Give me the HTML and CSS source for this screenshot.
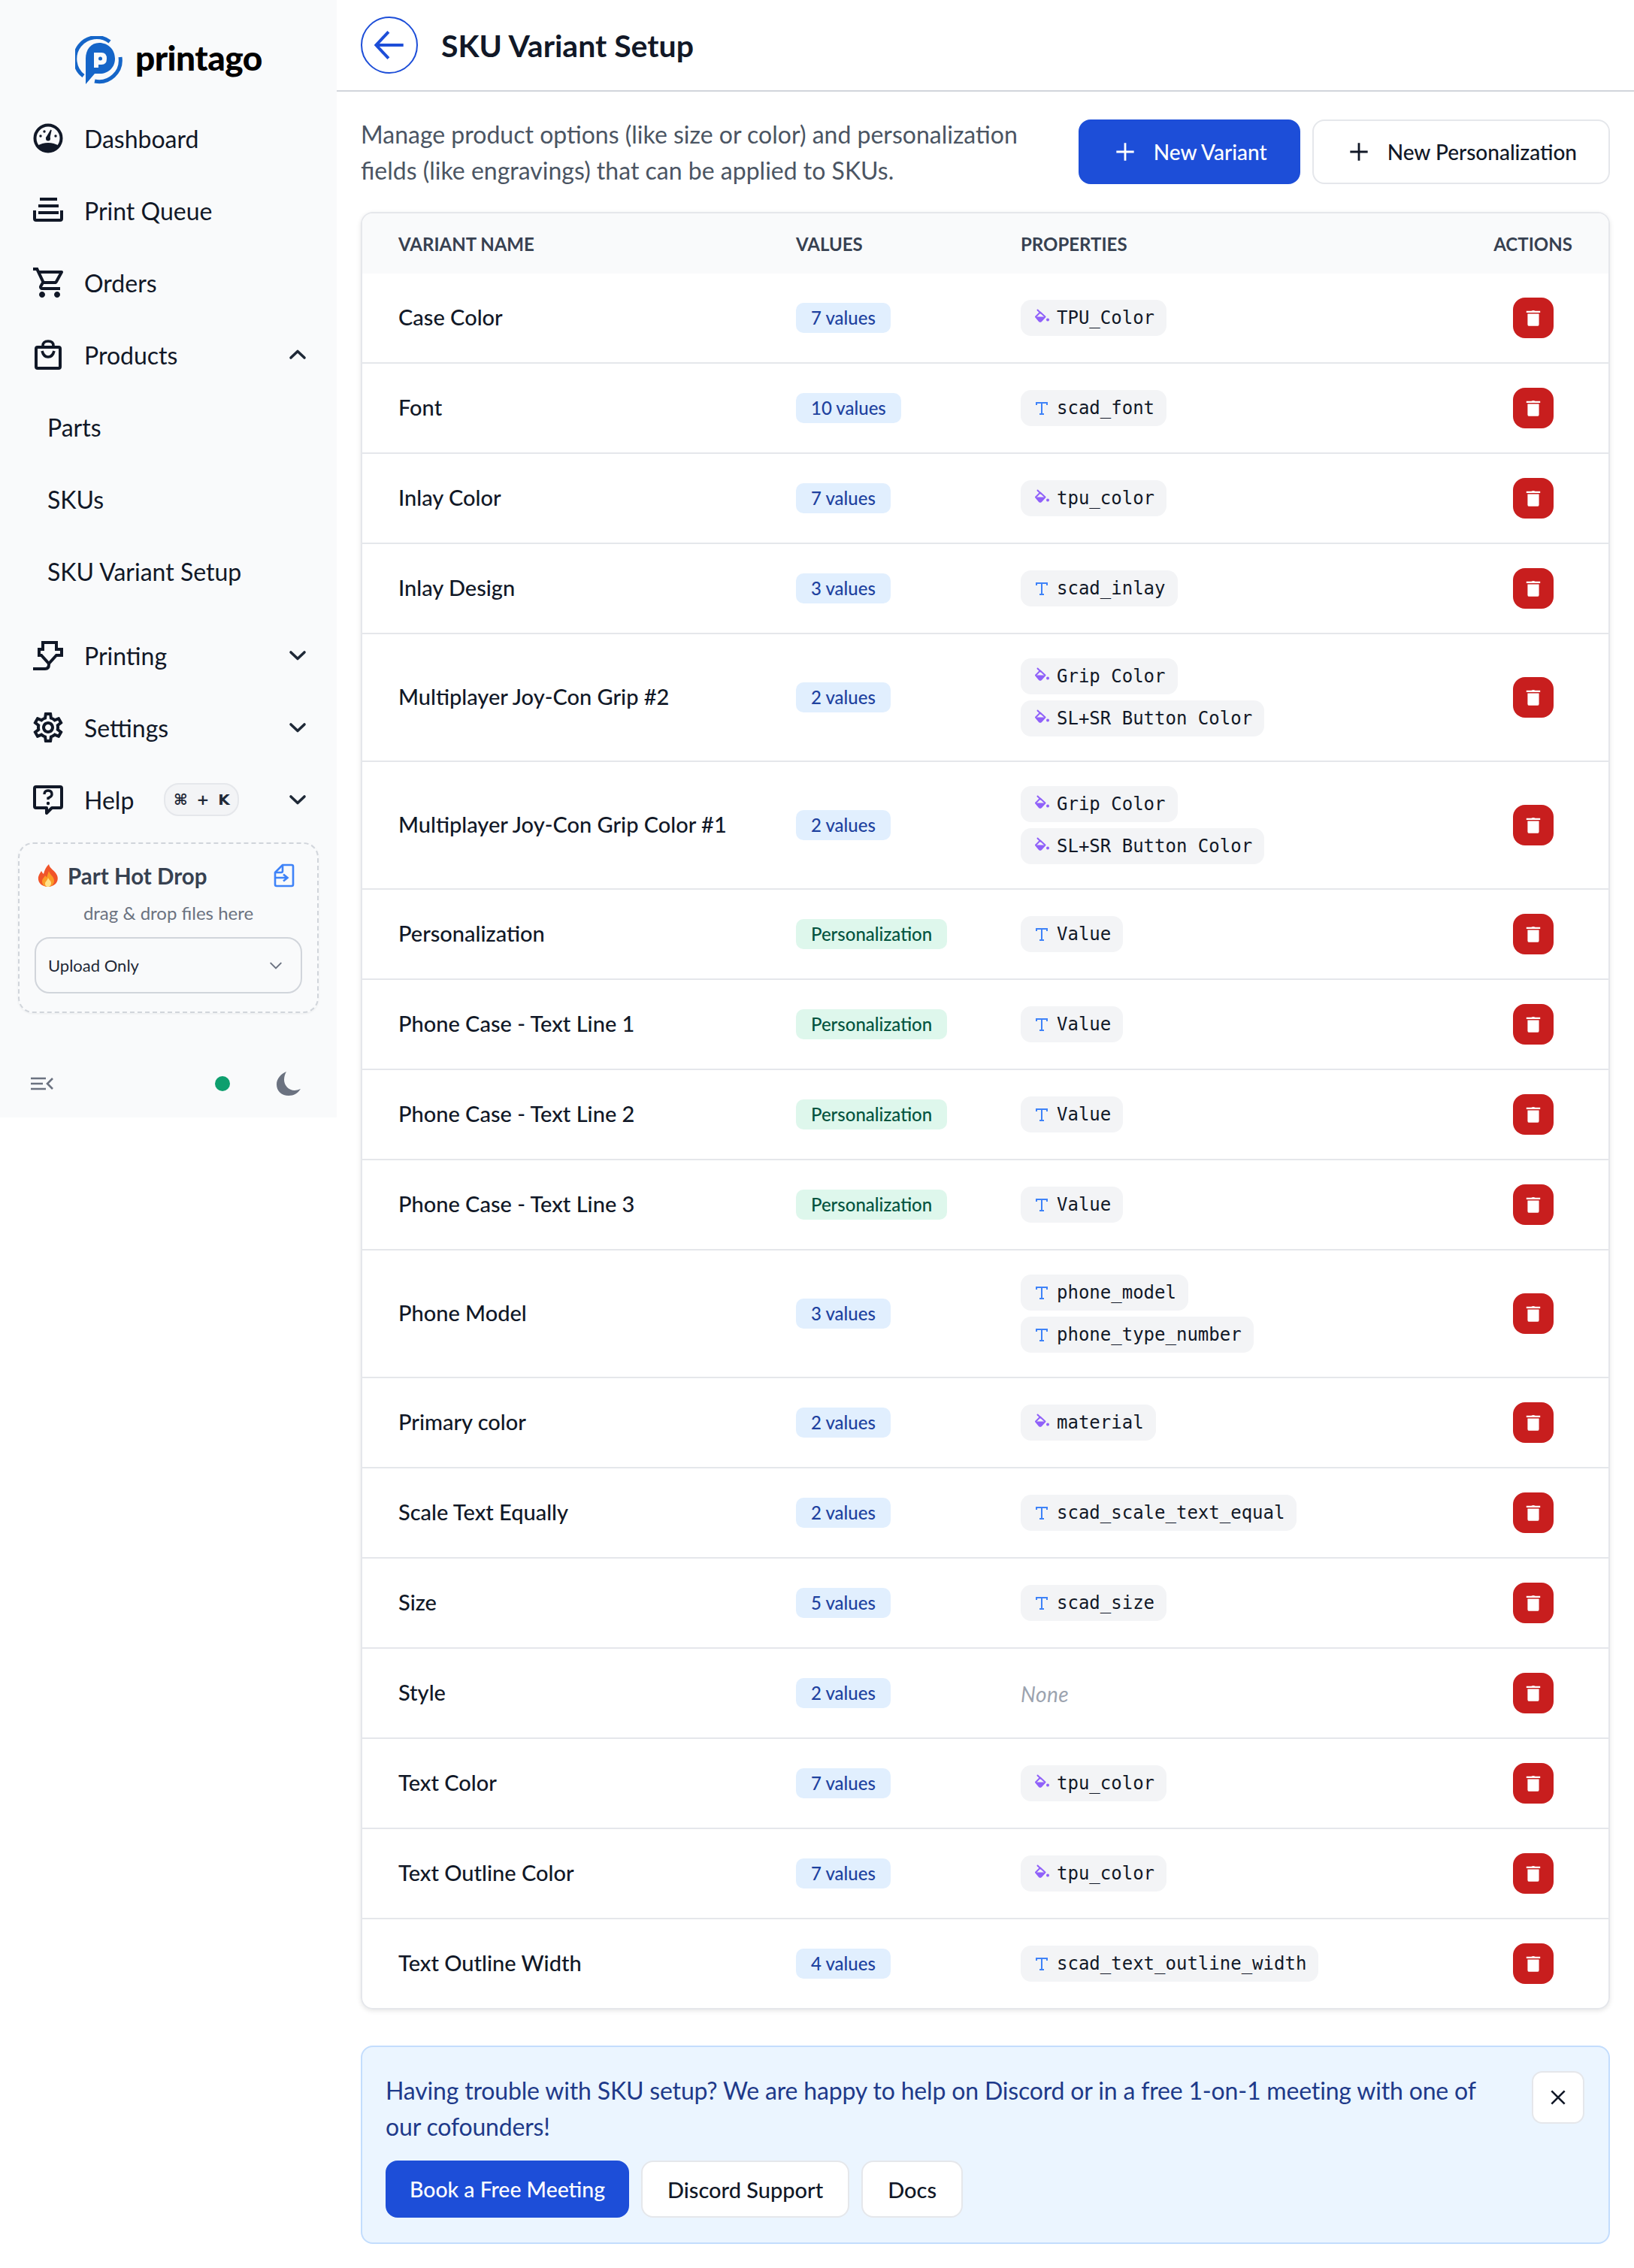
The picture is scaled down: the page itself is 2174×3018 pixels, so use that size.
FILE: index.html
```html
<!DOCTYPE html>
<html lang="en">
<head>
  <meta charset="UTF-8">
  <meta name="viewport" content="width=device-width, initial-scale=1.0">
  <title>Printago - SKU Variant Setup</title>
  <link rel="stylesheet" href="styles.css">
</head>
<body>
  <svg class="sprite" xmlns="http://www.w3.org/2000/svg">
    <symbol id="bucket" viewBox="0 0 24 24">
      <path d="M6.500 1.500 10.500 5.500" fill="none" stroke="currentColor" stroke-width="2" stroke-linecap="round"/>
      <path d="M4 10.500 10 4.500 16.500 10.500 11 16.500Q10 17.200 9 16.500Z" fill="none" stroke="currentColor" stroke-width="2" stroke-linejoin="round"/>
      <path d="M4 10.500H16.500L11 16.500Q10 17.200 9 16.500Z" fill="currentColor"/>
      <circle cx="20" cy="14.500" r="2" fill="currentColor"/>
    </symbol>
    <symbol id="letter" viewBox="0 0 24 24">
      <path d="M5 8V5H19V8M12 5V20M9 20H15" fill="none" stroke="currentColor" stroke-width="2"/>
    </symbol>
    <symbol id="trash" viewBox="0 0 24 24">
      <path d="M9.500 3.500Q12 2 14.500 3.500H20.500V5.500H3.500V3.500Z" fill="currentColor"/>
      <path d="M5 7H19V20Q19 22 17 22H7Q5 22 5 20Z" fill="currentColor"/>
    </symbol>
    <symbol id="chev" viewBox="0 0 24 24">
      <path d="M3 8 12 16.500 21 8" fill="none" stroke="currentColor" stroke-width="3.600" stroke-linecap="round" stroke-linejoin="round"/>
    </symbol>
    <symbol id="plus" viewBox="0 0 24 24">
      <path d="M12 2V22M2 12H22" fill="none" stroke="currentColor" stroke-width="2.400"/>
    </symbol>
  </svg>

  <div class="app">
    <aside class="sidebar">
      <div class="brand">
        <svg class="brand-mark" viewBox="0 0 64 64">
          <path d="M46 7.500A28.500 28.500 0 0 0 11 53" fill="none" stroke="#1565c8" stroke-width="5"/>
          <path d="M26 60A28.500 28.500 0 0 0 60 28" fill="none" stroke="#1565c8" stroke-width="5"/>
          <path d="M32 9C44 9 53 18 53 30C53 42 44 50 33 50H26L14 64V30C14 18 21 9 32 9Z" fill="#1565c8"/>
          <path d="M25 22H35Q42 22 42 30T35 38H31V42H25Z" fill="#f9fafb"/>
          <rect x="31" y="27.500" width="5" height="5" rx="2.500" fill="#1565c8"/>
        </svg>
        <span class="brand-name">printago</span>
      </div>

      <nav class="nav">
        <a class="nav-item"><svg class="nav-icon" viewBox="0 0 40 40"><circle cx="20" cy="20" r="17.500" fill="none" stroke="currentColor" stroke-width="4"/><path d="M6 30Q12 26 20 26T34 30Q29 38 20 38T6 30Z" fill="currentColor"/><path d="M24 9 21.500 20 18 19Z" fill="currentColor" stroke="currentColor" stroke-width="1.500"/><circle cx="20" cy="20.500" r="3" fill="currentColor"/><circle cx="10" cy="17" r="1.700" fill="currentColor"/><circle cx="15" cy="11" r="1.700" fill="currentColor"/><circle cx="30" cy="17" r="1.700" fill="currentColor"/></svg><span>Dashboard</span></a>
        <a class="nav-item"><svg class="nav-icon" viewBox="0 0 40 40"><path d="M9 5H32M7 14H34M7 23H34" fill="none" stroke="currentColor" stroke-width="4"/><path d="M2 20V31Q2 33 4 33H36Q38 33 38 31V20" fill="none" stroke="currentColor" stroke-width="4"/></svg><span>Print Queue</span></a>
        <a class="nav-item"><svg class="nav-icon" viewBox="1 2 20 20"><path fill="currentColor" d="M15.550 13c.750 0 1.410-.410 1.750-1.030l3.580-6.490c.370-.660-.110-1.480-.870-1.480H5.210l-.940-2H1v2h2l3.600 7.590-1.350 2.440C4.520 15.370 5.480 17 7 17h12v-2H7l1.100-2h7.450zM6.160 6h12.150l-2.760 5H8.530L6.160 6zM7 18c-1.100 0-1.990.900-1.990 2S5.900 22 7 22s2-.900 2-2-.900-2-2-2zm10 0c-1.100 0-1.990.900-1.990 2s.890 2 1.990 2 2-.900 2-2-.900-2-2-2z"/></svg><span>Orders</span></a>
        <a class="nav-item"><svg class="nav-icon" viewBox="0 0 40 40"><rect x="4" y="10" width="32" height="28" rx="2" fill="none" stroke="currentColor" stroke-width="4"/><path d="M13 10V8Q13 2 20 2T27 8V10M12 15Q14 23 20 23T28 15" fill="none" stroke="currentColor" stroke-width="3.600"/></svg><span>Products</span><svg class="chev up"><use href="#chev"/></svg></a>
        <a class="nav-item sub"><span>Parts</span></a>
        <a class="nav-item sub"><span>SKUs</span></a>
        <a class="nav-item sub"><span>SKU Variant Setup</span></a>
        <a class="nav-item group-start"><svg class="nav-icon" viewBox="0 0 40 40"><path d="M13 3H31V12H38V20H31L21 31L11 20H8V12H13Z" fill="none" stroke="currentColor" stroke-width="4"/><path d="M0 38H16Q21 38 21 32" fill="none" stroke="currentColor" stroke-width="4"/></svg><span>Printing</span><svg class="chev"><use href="#chev"/></svg></a>
        <a class="nav-item"><svg class="nav-icon" viewBox="2 2 20 20"><path fill="currentColor" d="M19.430 12.980c.040-.320.070-.640.070-.980 0-.340-.030-.660-.070-.980l2.110-1.650c.190-.150.240-.420.120-.640l-2-3.460c-.090-.160-.260-.250-.440-.250-.060 0-.120.010-.170.030l-2.490 1c-.520-.400-1.080-.730-1.690-.980l-.380-2.650C14.460 2.180 14.250 2 14 2h-4c-.250 0-.460.180-.490.420l-.380 2.650c-.610.250-1.170.590-1.690.980l-2.490-1c-.060-.020-.120-.030-.180-.030-.170 0-.340.090-.430.250l-2 3.460c-.130.220-.070.490.120.640l2.110 1.650c-.040.320-.070.650-.070.980 0 .330.030.660.070.980l-2.110 1.650c-.190.150-.240.420-.120.640l2 3.460c.090.160.260.250.440.250.060 0 .120-.010.170-.030l2.490-1c.520.400 1.080.730 1.690.980l.380 2.650c.030.240.240.420.490.420h4c.250 0 .460-.180.490-.42l.380-2.650c.610-.250 1.170-.590 1.690-.980l2.490 1c.060.020.120.030.180.030.170 0 .340-.090.430-.250l2-3.460c.120-.220.070-.490-.120-.640l-2.110-1.650zm-1.980-1.710c.040.310.050.520.050.730 0 .210-.020.430-.050.730l-.140 1.130.890.700 1.080.840-.700 1.210-1.270-.510-1.040-.420-.900.680c-.430.320-.840.560-1.250.730l-1.060.430-.160 1.130-.200 1.350h-1.400l-.190-1.350-.160-1.130-1.060-.430c-.430-.180-.830-.410-1.230-.710l-.910-.700-1.060.430-1.270.510-.700-1.210 1.080-.84.890-.700-.140-1.130c-.030-.310-.050-.540-.050-.740s.020-.430.050-.730l.140-1.130-.890-.700-1.080-.84.700-1.210 1.270.510 1.040.420.900-.680c.430-.320.840-.560 1.250-.730l1.060-.430.160-1.130.200-1.350h1.390l.190 1.350.160 1.130 1.060.430c.430.180.830.410 1.230.710l.910.700 1.060-.430 1.270-.510.700 1.210-1.070.850-.890.700.140 1.130zM12 8c-2.210 0-4 1.790-4 4s1.790 4 4 4 4-1.790 4-4-1.790-4-4-4zm0 6c-1.100 0-2-.900-2-2s.900-2 2-2 2 .900 2 2-.900 2-2 2z"/></svg><span>Settings</span><svg class="chev"><use href="#chev"/></svg></a>
        <a class="nav-item"><svg class="nav-icon" viewBox="0 0 40 40"><path d="M4 3H36Q38 3 38 5V29Q38 31 36 31H25L18 38V31H4Q2 31 2 29V5Q2 3 4 3Z" fill="none" stroke="currentColor" stroke-width="4" stroke-linejoin="round"/><path d="M15 13Q15 8 20 8T25 13Q25 16 20 18V20" fill="none" stroke="currentColor" stroke-width="3.400"/><circle cx="20" cy="25" r="2.200" fill="currentColor"/></svg><span>Help</span><kbd class="shortcut">⌘ + K</kbd><svg class="chev"><use href="#chev"/></svg></a>
      </nav>

      <section class="hot-drop">
        <div class="hot-drop-head">
          <svg class="flame" viewBox="0 0 28 30">
            <path d="M15 0C16 6 23 8 26 15C29 23 23 30 14 30C5 30 0 24 1 17C2 13 4 11 5 9C6 11 7 12 8 13C9 8 11 4 15 0Z" fill="#f0542a"/>
            <path d="M15 9C16 14 22 16 22 22C22 27 18 30 14 30C9 30 6 27 6 23C6 19 9 18 10 15C11 16 12 17 12 18C13 15 14 12 15 9Z" fill="#fb9a26"/>
            <path d="M14 18C15 21 18 22 18 25C18 28 16 30 14 30C11 30 10 28 10 26C10 23 13 22 14 18Z" fill="#ffe28a"/>
          </svg>
          <span class="hot-drop-title">Part Hot Drop</span>
          <svg class="file-icon" viewBox="0 0 28 32"><path d="M12 2H24Q26 2 26 4V28Q26 30 24 30H4Q2 30 2 28V12Z" fill="none" stroke="currentColor" stroke-width="2.600" stroke-linejoin="round"/><path d="M12 2V10Q12 12 10 12H2" fill="none" stroke="currentColor" stroke-width="2.600"/><path d="M2 19H18M13 14.500 18.500 19 13 23.500" fill="none" stroke="currentColor" stroke-width="2.600"/></svg>
        </div>
        <p class="hot-drop-hint">drag &amp; drop files here</p>
        <div class="select"><span>Upload Only</span><svg class="select-chev" viewBox="0 0 16 16"><path d="M2 5 8 11 14 5" fill="none" stroke="currentColor" stroke-width="1.800" stroke-linecap="round"/></svg></div>
      </section>

      <div class="sidebar-foot">
        <svg class="collapse" viewBox="0 0 30 20"><path d="M0 3H20M0 10H16M0 17H20M29 3 22 10 29 17" fill="none" stroke="currentColor" stroke-width="2.600"/></svg>
        <span class="status-dot"></span>
        <svg class="moon" viewBox="0 0 32 32"><path d="M13 0C6 3 0 9 0 17C0 26 7 32 16 32C23 32 28 29 32 23C29 24 26 25 24 25C16 25 10 18 10 11C10 7 11 3 13 0Z" fill="currentColor"/></svg>
      </div>
    </aside>

    <main class="main">
      <header class="page-head">
        <button class="back"><svg viewBox="0 0 40 40"><path d="M37 20H4M19 4 4 20 19 36" fill="none" stroke="currentColor" stroke-width="3.600"/></svg></button>
        <h1>SKU Variant Setup</h1>
      </header>

      <div class="content">
        <div class="toolbar">
          <p class="intro">Manage product options (like size or color) and personalization fields (like engravings) that can be applied to SKUs.</p>
          <div class="toolbar-btns">
            <button class="btn btn-primary"><svg class="btn-icon"><use href="#plus"/></svg>New Variant</button>
            <button class="btn btn-light"><svg class="btn-icon"><use href="#plus"/></svg>New Personalization</button>
          </div>
        </div>

        <div class="card">
          <table class="variants">
            <colgroup><col class="col-name"><col class="col-values"><col class="col-props"><col class="col-actions"></colgroup>
            <thead>
              <tr><th>Variant Name</th><th>Values</th><th>Properties</th><th class="th-actions">Actions</th></tr>
            </thead>
            <tbody>
              <tr><td>Case Color</td><td><span class="badge">7 values</span></td><td><span class="chip"><svg class="ic-bucket"><use href="#bucket"/></svg>TPU_Color</span></td><td class="td-actions"><button class="del"><svg><use href="#trash"/></svg></button></td></tr>
              <tr><td>Font</td><td><span class="badge">10 values</span></td><td><span class="chip"><svg class="ic-text"><use href="#letter"/></svg>scad_font</span></td><td class="td-actions"><button class="del"><svg><use href="#trash"/></svg></button></td></tr>
              <tr><td>Inlay Color</td><td><span class="badge">7 values</span></td><td><span class="chip"><svg class="ic-bucket"><use href="#bucket"/></svg>tpu_color</span></td><td class="td-actions"><button class="del"><svg><use href="#trash"/></svg></button></td></tr>
              <tr><td>Inlay Design</td><td><span class="badge">3 values</span></td><td><span class="chip"><svg class="ic-text"><use href="#letter"/></svg>scad_inlay</span></td><td class="td-actions"><button class="del"><svg><use href="#trash"/></svg></button></td></tr>
              <tr><td>Multiplayer Joy-Con Grip #2</td><td><span class="badge">2 values</span></td><td><div class="chips"><span class="chip"><svg class="ic-bucket"><use href="#bucket"/></svg>Grip Color</span><span class="chip"><svg class="ic-bucket"><use href="#bucket"/></svg>SL+SR Button Color</span></div></td><td class="td-actions"><button class="del"><svg><use href="#trash"/></svg></button></td></tr>
              <tr><td>Multiplayer Joy-Con Grip Color #1</td><td><span class="badge">2 values</span></td><td><div class="chips"><span class="chip"><svg class="ic-bucket"><use href="#bucket"/></svg>Grip Color</span><span class="chip"><svg class="ic-bucket"><use href="#bucket"/></svg>SL+SR Button Color</span></div></td><td class="td-actions"><button class="del"><svg><use href="#trash"/></svg></button></td></tr>
              <tr><td>Personalization</td><td><span class="badge badge-green">Personalization</span></td><td><span class="chip"><svg class="ic-text"><use href="#letter"/></svg>Value</span></td><td class="td-actions"><button class="del"><svg><use href="#trash"/></svg></button></td></tr>
              <tr><td>Phone Case - Text Line 1</td><td><span class="badge badge-green">Personalization</span></td><td><span class="chip"><svg class="ic-text"><use href="#letter"/></svg>Value</span></td><td class="td-actions"><button class="del"><svg><use href="#trash"/></svg></button></td></tr>
              <tr><td>Phone Case - Text Line 2</td><td><span class="badge badge-green">Personalization</span></td><td><span class="chip"><svg class="ic-text"><use href="#letter"/></svg>Value</span></td><td class="td-actions"><button class="del"><svg><use href="#trash"/></svg></button></td></tr>
              <tr><td>Phone Case - Text Line 3</td><td><span class="badge badge-green">Personalization</span></td><td><span class="chip"><svg class="ic-text"><use href="#letter"/></svg>Value</span></td><td class="td-actions"><button class="del"><svg><use href="#trash"/></svg></button></td></tr>
              <tr><td>Phone Model</td><td><span class="badge">3 values</span></td><td><div class="chips"><span class="chip"><svg class="ic-text"><use href="#letter"/></svg>phone_model</span><span class="chip"><svg class="ic-text"><use href="#letter"/></svg>phone_type_number</span></div></td><td class="td-actions"><button class="del"><svg><use href="#trash"/></svg></button></td></tr>
              <tr><td>Primary color</td><td><span class="badge">2 values</span></td><td><span class="chip"><svg class="ic-bucket"><use href="#bucket"/></svg>material</span></td><td class="td-actions"><button class="del"><svg><use href="#trash"/></svg></button></td></tr>
              <tr><td>Scale Text Equally</td><td><span class="badge">2 values</span></td><td><span class="chip"><svg class="ic-text"><use href="#letter"/></svg>scad_scale_text_equal</span></td><td class="td-actions"><button class="del"><svg><use href="#trash"/></svg></button></td></tr>
              <tr><td>Size</td><td><span class="badge">5 values</span></td><td><span class="chip"><svg class="ic-text"><use href="#letter"/></svg>scad_size</span></td><td class="td-actions"><button class="del"><svg><use href="#trash"/></svg></button></td></tr>
              <tr><td>Style</td><td><span class="badge">2 values</span></td><td><span class="none">None</span></td><td class="td-actions"><button class="del"><svg><use href="#trash"/></svg></button></td></tr>
              <tr><td>Text Color</td><td><span class="badge">7 values</span></td><td><span class="chip"><svg class="ic-bucket"><use href="#bucket"/></svg>tpu_color</span></td><td class="td-actions"><button class="del"><svg><use href="#trash"/></svg></button></td></tr>
              <tr><td>Text Outline Color</td><td><span class="badge">7 values</span></td><td><span class="chip"><svg class="ic-bucket"><use href="#bucket"/></svg>tpu_color</span></td><td class="td-actions"><button class="del"><svg><use href="#trash"/></svg></button></td></tr>
              <tr><td>Text Outline Width</td><td><span class="badge">4 values</span></td><td><span class="chip"><svg class="ic-text"><use href="#letter"/></svg>scad_text_outline_width</span></td><td class="td-actions"><button class="del"><svg><use href="#trash"/></svg></button></td></tr>
            </tbody>
          </table>
        </div>

        <div class="help-banner">
          <div class="help-top">
            <p>Having trouble with SKU setup? We are happy to help on Discord or in a free 1-on-1 meeting with one of our cofounders!</p>
            <button class="close"><svg viewBox="0 0 24 24"><path d="M4 4 20 20M20 4 4 20" fill="none" stroke="currentColor" stroke-width="2.400"/></svg></button>
          </div>
          <div class="help-btns">
            <button class="btn btn-primary btn-sm">Book a Free Meeting</button>
            <button class="btn btn-light btn-sm">Discord Support</button>
            <button class="btn btn-light btn-sm">Docs</button>
          </div>
        </div>
      </div>
    </main>
  </div>
</body>
</html>
```

FILE: styles.css
```css
* {
  box-sizing: border-box;
}
body {
  margin: 0;
  background: #fff;
  color: #111827;
  font-family: "Lato", "Open Sans", sans-serif;
}
button {
  font-family: inherit;
  cursor: pointer;
}
.sprite {
  display: none;
}
.app {
  display: flex;
  align-items: flex-start;
  min-height: 3018px;
}

/* sidebar */
.sidebar {
  width: 448px;
  height: 1487px;
  flex-shrink: 0;
  background: #f9fafb;
  display: flex;
  flex-direction: column;
}
.brand {
  height: 136px;
  padding: 24px 0 0 100px;
  display: flex;
  align-items: center;
  gap: 16px;
}
.brand-mark {
  width: 64px;
  height: 64px;
}
.brand-name {
  margin-bottom: 8px;
  font-size: 46px;
  font-weight: 900;
  color: #000;
  letter-spacing: -0.5px;
}
.nav-item {
  height: 96px;
  padding: 0 40px 0 44px;
  display: flex;
  align-items: center;
  font-size: 32px;
  color: #111827;
}
.nav-icon {
  width: 40px;
  height: 40px;
  margin-right: 28px;
  color: #111827;
  flex-shrink: 0;
}
.nav-item.sub {
  padding-left: 63px;
}
.nav-item.group-start {
  margin-top: 16px;
}
.chev {
  width: 24px;
  height: 24px;
  margin-left: auto;
  color: #1f2937;
}
.chev.up {
  transform: rotate(180deg);
}
.shortcut {
  margin-left: 40px;
  width: 100px;
  height: 44px;
  display: flex;
  align-items: center;
  justify-content: center;
  background: #f3f4f6;
  border: 2px solid #e5e7eb;
  border-radius: 20px;
  font-family: "DejaVu Sans", sans-serif;
  font-size: 20px;
  font-weight: 700;
  white-space: pre;
  word-spacing: 5px;
  color: #1f2937;
}
.hot-drop {
  margin: 9px 24px 0;
  height: 227px;
  padding: 20px 20px 0;
  border: 2px dashed #d1d5db;
  border-radius: 20px;
  box-shadow: 0 1px 3px rgba(0, 0, 0, 0.06);
}
.hot-drop-head {
  display: flex;
  align-items: center;
  padding-left: 4px;
  height: 44px;
}
.flame {
  width: 28px;
  height: 30px;
  margin-right: 12px;
}
.hot-drop-title {
  font-size: 29.500px;
  font-weight: 700;
  color: #374151;
}
.file-icon {
  width: 28px;
  height: 32px;
  margin-left: auto;
  margin-right: 10px;
  color: #3f83f8;
}
.hot-drop-hint {
  margin: 10px 0 0;
  height: 36px;
  line-height: 36px;
  text-align: center;
  font-size: 24px;
  color: #6b7280;
}
.select {
  margin-top: 14px;
  height: 75px;
  padding: 0 24px 0 16px;
  display: flex;
  align-items: center;
  justify-content: space-between;
  border: 2px solid #d1d5db;
  border-radius: 20px;
  font-size: 22px;
  color: #1f2937;
}
.select-chev {
  width: 18px;
  height: 18px;
  color: #6b7280;
}
.sidebar-foot {
  margin-top: 78px;
  padding: 0 48px 0 41px;
  display: flex;
  align-items: center;
  color: #6b7280;
}
.collapse {
  width: 30px;
  height: 20px;
}
.status-dot {
  width: 20px;
  height: 20px;
  border-radius: 50%;
  background: #0e9f6e;
  margin-left: auto;
  margin-right: 62px;
}
.moon {
  width: 32px;
  height: 32px;
}

/* main */
.main {
  flex: 1;
  min-width: 0;
}
.page-head {
  height: 122px;
  padding: 0 32px;
  display: flex;
  align-items: center;
  gap: 31px;
  border-bottom: 2px solid #d1d5db;
}
.back {
  width: 76px;
  height: 76px;
  padding: 14px;
  background: #fff;
  border: 2px solid #1d4ed8;
  border-radius: 50%;
  color: #1d4ed8;
  display: flex;
}
.back svg {
  width: 100%;
  height: 100%;
}
h1 {
  margin: 0;
  font-size: 41px;
  font-weight: 700;
  color: #111827;
}
.content {
  padding: 32px;
}
.toolbar {
  display: flex;
  align-items: center;
  justify-content: space-between;
  height: 96px;
  margin-bottom: 32px;
}
.intro {
  margin: 2px 0 0;
  width: 920px;
  font-size: 32px;
  line-height: 48px;
  color: #4b5563;
}
.toolbar-btns {
  display: flex;
  gap: 16px;
}
.btn {
  height: 86px;
  padding: 0 42px 0 46px;
  display: inline-flex;
  align-items: center;
  border-radius: 16px;
  font-size: 28px;
  font-weight: 500;
  white-space: nowrap;
}
.btn-primary {
  background: #1d4ed8;
  border: 2px solid #1d4ed8;
  color: #fff;
}
.btn-light {
  background: #fff;
  border: 2px solid #e5e7eb;
  color: #111827;
}
.btn-icon {
  width: 28px;
  height: 28px;
  margin-right: 24px;
}
.btn-sm {
  height: 76px;
  padding: 0 30px;
  font-size: 28.400px;
}
.btn-light.btn-sm {
  padding: 0 33px;
  font-size: 29px;
}

/* table */
.card {
  border: 2px solid #e5e7eb;
  border-radius: 16px;
  box-shadow: 0 2px 6px rgba(0, 0, 0, 0.1);
  overflow: hidden;
}
.variants {
  width: 100%;
  table-layout: fixed;
  border-collapse: collapse;
}
.col-name { width: 529px; }
.col-values { width: 299px; }
.col-props { width: 629px; }
.col-actions { width: 201px; }
.variants th {
  height: 80px;
  padding: 0 48px;
  background: #f9fafb;
  text-align: left;
  font-size: 24px;
  font-weight: 700;
  text-transform: uppercase;
  color: #374151;
}
.variants .th-actions {
  text-align: center;
  padding: 0;
}
.variants td {
  padding: 32px 48px;
  border-bottom: 2px solid #e5e7eb;
  font-size: 29px;
  font-weight: 500;
  color: #111827;
  white-space: nowrap;
}
.variants td:first-child {
  padding-top: 30px;
  padding-bottom: 34px;
}
.variants tbody tr:last-child td {
  border-bottom: 0;
}
.variants .td-actions {
  padding: 32px 0;
  text-align: center;
}
.badge {
  display: inline-block;
  height: 40px;
  line-height: 40px;
  padding: 0 20px;
  border-radius: 10px;
  background: #e1effe;
  color: #1e429f;
  font-size: 24px;
  font-weight: 500;
}
.badge-green {
  background: #def7ec;
  color: #03543f;
}
.chips {
  display: flex;
  flex-direction: column;
  align-items: flex-start;
  gap: 8px;
}
.chip {
  display: inline-flex;
  align-items: center;
  height: 48px;
  padding: 0 16px;
  border-radius: 14px;
  background: #f3f4f6;
  font-family: "DejaVu Sans Mono", monospace;
  font-size: 24px;
  font-weight: 400;
  color: #111827;
  white-space: pre;
  vertical-align: middle;
}
.chip svg {
  width: 24px;
  height: 24px;
  margin-right: 8px;
  flex-shrink: 0;
}
.ic-bucket {
  color: #9061f9;
}
.ic-text {
  color: #3f83f8;
}
.none {
  font-size: 28px;
  font-style: italic;
  font-weight: 400;
  color: #9ca3af;
  letter-spacing: 0.5px;
}
.del {
  width: 54px;
  height: 54px;
  padding: 14px;
  display: inline-flex;
  vertical-align: middle;
  border: 0;
  border-radius: 16px;
  background: #c81e1e;
  color: #fff;
}
.del svg {
  width: 26px;
  height: 26px;
}

/* help banner */
.help-banner {
  margin-top: 48px;
  height: 264px;
  padding: 32px 32px 32px 31px;
  background: #ebf5ff;
  border: 2px solid #c3ddfd;
  border-radius: 16px;
}
.help-top {
  display: flex;
  align-items: flex-start;
  justify-content: space-between;
}
.help-top p {
  margin: 2px 0 0;
  width: 1470px;
  font-size: 32px;
  line-height: 48px;
  letter-spacing: -0.17px;
  color: #1e3a8a;
}
.close {
  width: 70px;
  height: 70px;
  padding: 20px;
  background: #fff;
  border: 2px solid #e5e7eb;
  border-radius: 14px;
  color: #111827;
  display: flex;
}
.close svg {
  width: 100%;
  height: 100%;
}
.help-btns {
  display: flex;
  gap: 16px;
  margin-top: 21px;
}
```
